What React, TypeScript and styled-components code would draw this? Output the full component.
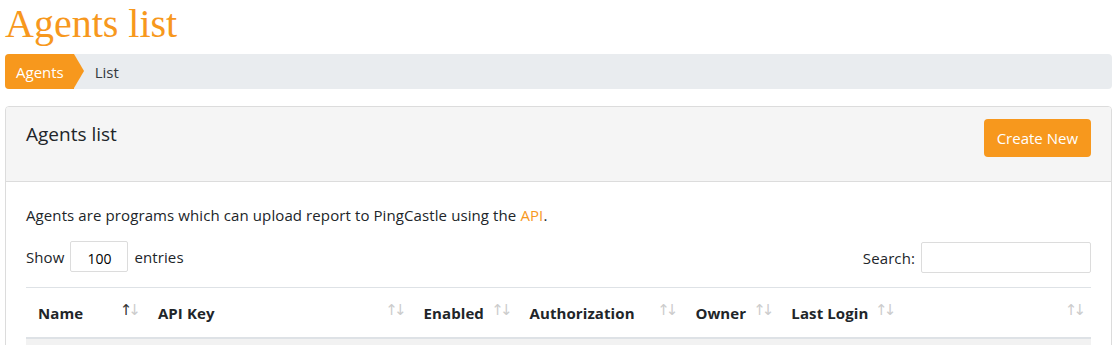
import styled, { createGlobalStyle } from "styled-components";

const ORANGE = "#f7981d";

const GlobalStyle = createGlobalStyle`
  body {
    margin: 0;
    background: #fff;
    font-family: "Open Sans", "Noto Sans", sans-serif;
    font-size: 15px;
    color: #212529;
  }
  * { box-sizing: border-box; }
`;

const Page = styled.div`
  padding: 0 3px 0 5px;
`;

const PageTitle = styled.h1`
  margin: 0;
  height: 54px;
  padding-top: 2px;
  font-family: "Liberation Serif", serif;
  font-weight: normal;
  font-size: 40px;
  line-height: 44px;
  color: ${ORANGE};
`;

const Crumbs = styled.nav`
  display: flex;
  align-items: center;
  height: 35px;
  background: #e9ecef;
  border-radius: 4px;
  overflow: hidden;
`;

const ActiveCrumb = styled.span`
  position: relative;
  display: flex;
  align-items: center;
  height: 100%;
  padding: 0 10px 0 11px;
  background: ${ORANGE};
  color: #fff;
  font-size: 15px;
  &::after {
    content: "";
    position: absolute;
    right: -10px;
    top: 0;
    border-top: 17.5px solid transparent;
    border-bottom: 17.5px solid transparent;
    border-left: 10px solid ${ORANGE};
  }
`;

const Crumb = styled.span`
  padding-left: 21px;
  font-size: 15px;
  color: #343a40;
`;

const Card = styled.section`
  margin-top: 17px;
  border: 1px solid #dcdcdc;
  border-radius: 4px;
  overflow: hidden;
`;

const CardHeader = styled.div`
  display: flex;
  justify-content: space-between;
  align-items: flex-start;
  height: 75px;
  padding: 12px 20px 0 20px;
  background: #f5f5f5;
  border-bottom: 1px solid #dcdcdc;
`;

const CardTitle = styled.h3`
  margin: 2px 0 0;
  font-size: 19px;
  font-weight: normal;
  color: #212529;
`;

const Button = styled.button`
  height: 38px;
  padding: 0 13px;
  border: none;
  border-radius: 4px;
  background: ${ORANGE};
  color: #fff;
  font-family: inherit;
  font-size: 15px;
`;

const CardBody = styled.div`
  padding: 23px 20px 0 20px;
  letter-spacing: 0.1px;
`;

const Intro = styled.p`
  margin: 0 0 17px;
`;

const Link = styled.a`
  color: ${ORANGE};
  text-decoration: none;
`;

const Controls = styled.div`
  display: flex;
  justify-content: space-between;
  align-items: center;
  margin-bottom: 14px;
  & > label:first-child {
    margin-top: -2px;
  }
`;

const Label = styled.label`
  display: flex;
  align-items: center;
  gap: 6px;
`;

const Input = styled.input<{ w: number }>`
  width: ${(p) => p.w}px;
  height: 31px;
  border: 1px solid #dcdcdc;
  border-radius: 2px;
  font-family: inherit;
  font-size: 14px;
  text-align: center;
  padding: 4px 0 0;
`;

const Table = styled.table`
  width: 100%;
  border-collapse: collapse;
  border-top: 1px solid #dee2e6;
`;

const Th = styled.th<{ w: number }>`
  position: relative;
  width: ${(p) => p.w}px;
  height: 50px;
  padding: 1px 12px 0;
  text-align: left;
  font-size: 15px;
  font-weight: 700;
  border-bottom: 2px solid #dee2e6;
`;

const SortIcon = styled.span<{ active?: boolean }>`
  position: absolute;
  right: 9px;
  top: 13px;
  font-family: "DejaVu Sans", sans-serif;
  font-size: 15px;
  font-weight: normal;
  letter-spacing: -4px;
  color: #cccccc;
  & b {
    font-weight: normal;
    color: ${(p) => (p.active ? "#333" : "#cccccc")};
  }
`;

const Row = styled.tr`
  background: #f2f2f2;
  & td {
    height: 20px;
  }
`;

const columns = [
  { name: "Name", w: 120, active: true },
  { name: "API Key", w: 266 },
  { name: "Enabled", w: 106 },
  { name: "Authorization", w: 166 },
  { name: "Owner", w: 96 },
  { name: "Last Login", w: 122 },
  { name: "", w: 190 },
];

export default function App() {
  return (
    <Page>
      <GlobalStyle />
      <PageTitle>Agents list</PageTitle>
      <Crumbs>
        <ActiveCrumb>Agents</ActiveCrumb>
        <Crumb>List</Crumb>
      </Crumbs>
      <Card>
        <CardHeader>
          <CardTitle>Agents list</CardTitle>
          <Button>Create New</Button>
        </CardHeader>
        <CardBody>
          <Intro>
            Agents are programs which can upload report to PingCastle using the{" "}
            <Link href="#">API</Link>.
          </Intro>
          <Controls>
            <Label>
              Show <Input w={58} defaultValue="100" /> entries
            </Label>
            <Label>
              Search: <Input w={170} />
            </Label>
          </Controls>
          <Table>
            <thead>
              <tr>
                {columns.map((c) => (
                  <Th key={c.name} w={c.w}>
                    {c.name}
                    <SortIcon active={c.active}>
                      <b>↑</b>↓
                    </SortIcon>
                  </Th>
                ))}
              </tr>
            </thead>
            <tbody>
              <Row>
                <td colSpan={7} />
              </Row>
            </tbody>
          </Table>
        </CardBody>
      </Card>
    </Page>
  );
}
